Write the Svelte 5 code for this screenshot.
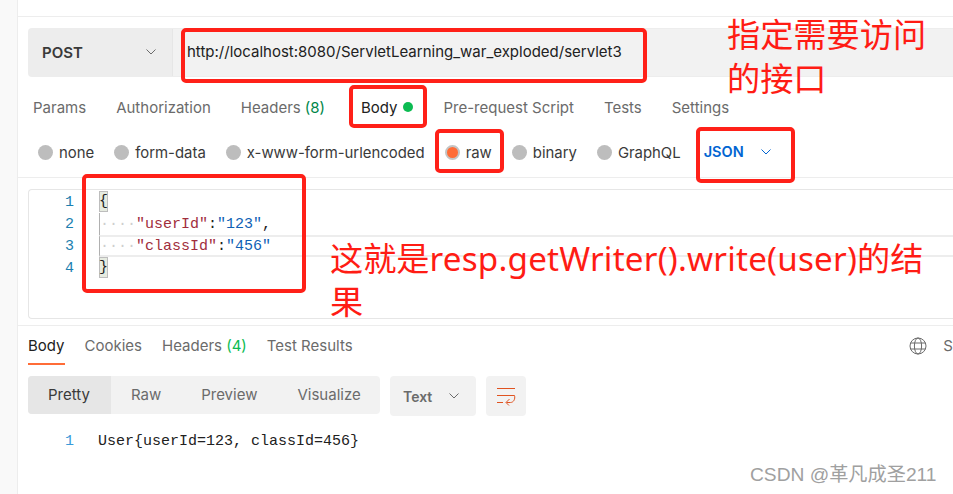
<script>
  const tabs = [
    { label: 'Params' },
    { label: 'Authorization' },
    { label: 'Headers', count: '(8)' },
    { label: 'Body', active: true, dot: true },
    { label: 'Pre-request Script' },
    { label: 'Tests' },
    { label: 'Settings' }
  ];
  const radios = [
    { label: 'none' },
    { label: 'form-data' },
    { label: 'x-www-form-urlencoded' },
    { label: 'raw', on: true },
    { label: 'binary' },
    { label: 'GraphQL' }
  ];
  const formats = ['Pretty', 'Raw', 'Preview', 'Visualize'];
  const marks = [
    { name: 'url', l: 181, t: 28, w: 466, h: 55 },
    { name: 'body', l: 349, t: 85, w: 78, h: 43 },
    { name: 'raw', l: 435, t: 129, w: 69, h: 44 },
    { name: 'json', l: 696, t: 127, w: 99, h: 56 },
    { name: 'code', l: 82, t: 174, w: 224, h: 119 }
  ];
</script>

<div class="page">
  <aside class="rail"></aside>
  <main class="main">
    <div class="top"></div>

    <div class="urlbar">
      <div class="method">
        <span>POST</span>
        <svg width="14" height="14" viewBox="0 0 14 14"><path d="M2.5 4.5 7 9l4.5-4.5" /></svg>
      </div>
      <div class="url">http://localhost:8080/ServletLearning_war_exploded/servlet3</div>
    </div>

    <nav class="tabs">
      {#each tabs as t}
        <span class="tab" class:active={t.active}>
          <span>{t.label}</span>
          {#if t.count}<em>{t.count}</em>{/if}
          {#if t.dot}<i class="dot"></i>{/if}
        </span>
      {/each}
    </nav>

    <div class="radios">
      {#each radios as r}
        <label class="radio" class:on={r.on}><i></i>{r.label}</label>
      {/each}
      <span class="json">JSON
        <svg width="14" height="14" viewBox="0 0 14 14"><path d="M2.5 4.5 7 9l4.5-4.5" /></svg>
      </span>
    </div>

    <div class="editor">
      <div class="gutter"><span>1</span><span>2</span><span>3</span><span>4</span></div>
      <div class="code">
        <div class="line"><b class="brace">&#123;</b></div>
        <div class="line guide"><s>····</s><span class="key">"userId"</span>:<span class="val">"123"</span>,</div>
        <div class="line guide current"><s>····</s><span class="key">"classId"</span>:<span class="val">"456"</span></div>
        <div class="line"><b class="brace">&#125;</b></div>
      </div>
    </div>

    <div class="response">
      <nav class="restabs">
        <span class="active">Body</span>
        <span>Cookies</span>
        <span>Headers <em>(4)</em></span>
        <span>Test Results</span>
        <div class="net">
          <svg width="18" height="18" viewBox="0 0 18 18">
            <circle cx="9" cy="9" r="8" />
            <ellipse cx="9" cy="9" rx="3.6" ry="8" />
            <path d="M1.6 6h14.8M1.6 12h14.8" />
          </svg>
          <span>Status</span>
        </div>
      </nav>

      <div class="tools">
        <div class="seg">
          {#each formats as f, i}
            <span class:sel={i === 0}>{f}</span>
          {/each}
        </div>
        <div class="lang">
          <span>Text</span>
          <svg width="14" height="14" viewBox="0 0 14 14"><path d="M2.5 4.5 7 9l4.5-4.5" /></svg>
        </div>
        <div class="wrap">
          <svg width="20" height="20" viewBox="0 0 20 20">
            <path d="M1 2.5h18M1 9.500h17.500M1 16.500h6" />
            <path d="M18.500 9.500c1 3.500-1 7-4 7h-4M13.500 13l-3.500 3.500 3 3" />
          </svg>
        </div>
      </div>

      <div class="output"><span class="no">1</span><code>User&#123;userId=123, classId=456&#125;</code></div>
    </div>
  </main>

  {#each marks as m}
    <div class="mark" style="left:{m.l}px;top:{m.t}px;width:{m.w}px;height:{m.h}px"></div>
  {/each}
  <p class="note note1">指定需要访问<br />的接口</p>
  <p class="note note2">这就是<span class="latin">resp.getWriter().write(user)</span>的结<br />果</p>
  <p class="credit">CSDN @革凡成圣211</p>
</div>

<style>
  :global(body) {
    margin: 0;
    background: #fff;
  }
  .page {
    position: relative;
    width: 953px;
    height: 494px;
    overflow: hidden;
    display: flex;
    font-family: Inter, "Noto Sans CJK SC", sans-serif;
    font-size: 14px;
    color: #212121;
  }
  .rail {
    width: 17px;
    flex: none;
    background: #f9f9f9;
    border-right: 1px solid #ededed;
  }
  .main {
    flex: 1;
    min-width: 0;
  }
  .top {
    height: 16px;
    border-bottom: 1px solid #ededed;
  }
  svg path,
  svg circle,
  svg ellipse {
    fill: none;
    stroke: currentColor;
  }

  .urlbar {
    display: flex;
    height: 49px;
    margin: 11px 0 0 10px;
    background: #f2f2f2;
    border: 1px solid #ededed;
    border-right: 0;
    border-radius: 4px 0 0 4px;
    box-sizing: border-box;
  }
  .method {
    width: 144px;
    box-sizing: border-box;
    padding: 0 14px 1px 13px;
    display: flex;
    align-items: center;
    justify-content: space-between;
    font-weight: 600;
    font-size: 15px;
    border-right: 1px solid #e6e6e6;
    background: #ededed;
    color: #3a3a3a;
  }
  .method svg {
    color: #6b6b6b;
  }
  .url {
    padding: 14px 0 0 14px;
    line-height: 17px;
    font-size: 15px;
    color: #212121;
  }

  .tabs {
    display: flex;
    gap: 30px;
    height: 34px;
    margin: 13px 0 0 15px;
    align-items: center;
    color: #6b6b6b;
    font-size: 15px;
  }
  .tab {
    display: flex;
    gap: 4px;
    align-items: center;
  }
  .tab.active {
    color: #212121;
    margin-left: 6px;
  }
  .tab em,
  .restabs em {
    font-style: normal;
    color: #0cbb52;
  }
  .tab em {
    color: #00864a;
  }
  .dot {
    width: 10px;
    height: 10px;
    border-radius: 50%;
    background: #0cbb52;
    margin-left: 2px;
  }

  .radios {
    display: flex;
    align-items: center;
    height: 44px;
    box-sizing: border-box;
    margin-top: 10px;
    padding: 0 0 6px 20px;
    border-bottom: 1px solid #ededed;
    gap: 20px;
    color: #3a3a3a;
  }
  .radio {
    display: flex;
    align-items: center;
    gap: 6px;
    font-size: 14.9px;
  }
  .radio i {
    width: 15px;
    height: 15px;
    border-radius: 50%;
    background: #bdbdbd;
  }
  .radio.on i {
    box-sizing: border-box;
    border: 2px solid #c4c4c4;
    background: #ff6c37;
  }
  .json {
    display: flex;
    align-items: center;
    gap: 15px;
    margin-left: 3px;
    color: #0265d2;
    font-weight: 600;
    font-size: 14.5px;
    padding-bottom: 2px;
  }

  .editor {
    display: flex;
    height: 130px;
    margin: 11px 0 0 10px;
    padding-top: 1px;
    box-sizing: border-box;
    border: 1px solid #e6e6e6;
    border-right: 0;
    border-radius: 4px 0 0 4px;
    font-family: "Liberation Mono", monospace;
    font-size: 15px;
  }
  .gutter {
    width: 45px;
    flex: none;
    display: flex;
    flex-direction: column;
    align-items: flex-end;
    padding-top: 1px;
    color: #1c7fb0;
    font-size: 15px;
  }
  .gutter span {
    height: 22px;
    line-height: 22px;
  }
  .code {
    flex: 1;
    margin-left: 25px;
  }
  .line {
    height: 22px;
    line-height: 24px;
    box-sizing: border-box;
    white-space: pre;
  }
  .guide {
    border-left: 1px solid #b0b0b0;
  }
  .current {
    border-top: 2px solid #ededed;
    border-bottom: 2px solid #ededed;
    line-height: 20px;
  }
  .line s {
    text-decoration: none;
    color: #cfcfcf;
  }
  .brace {
    display: inline-flex;
    justify-content: center;
    box-sizing: border-box;
    width: 9px;
    height: 21px;
    line-height: 19px;
    font-weight: 400;
    background: #e6ebe0;
    border: 1px solid #bdbdbd;
    vertical-align: top;
  }
  .key {
    color: #a12e3c;
  }
  .val {
    color: #0f5fb5;
  }

  .response {
    margin-top: 6px;
    border-top: 1px solid #ededed;
    padding: 0 0 0 10px;
  }
  .restabs {
    display: flex;
    align-items: center;
    gap: 20px;
    height: 39px;
    color: #6b6b6b;
    font-size: 15px;
  }
  .restabs > span {
    position: relative;
    line-height: 39px;
    height: 39px;
  }
  .restabs .active {
    color: #212121;
  }
  .restabs .active::after {
    content: "";
    position: absolute;
    left: 0;
    right: 0;
    bottom: 0;
    height: 2px;
    background: #ff6c37;
  }
  .net {
    margin-left: auto;
    display: flex;
    align-items: center;
    gap: 16px;
    margin-right: -35px;
    color: #6b6b6b;
  }
  .tools {
    display: flex;
    gap: 10px;
    margin-top: 11px;
  }
  .seg {
    display: flex;
    height: 38px;
    width: 352px;
    background: #f2f2f2;
    border-radius: 4px;
    overflow: hidden;
    color: #6b6b6b;
    font-size: 15px;
  }
  .seg span {
    padding: 0 20px;
    line-height: 37px;
  }
  .seg .sel {
    background: #e6e6e6;
    color: #3a3a3a;
    padding-right: 21px;
  }
  .lang {
    width: 86px;
    height: 40px;
    box-sizing: border-box;
    padding: 0 15px 0 13px;
    background: #f2f2f2;
    border-radius: 4px;
    display: flex;
    align-items: center;
    justify-content: space-between;
    font-weight: 600;
    font-size: 14px;
    color: #6b6b6b;
  }
  .wrap {
    width: 40px;
    height: 40px;
    display: grid;
    place-items: center;
    background: #f2f2f2;
    border-radius: 4px;
    color: #e05320;
  }
  .output {
    display: flex;
    margin-top: 15px;
    font-family: "Liberation Mono", monospace;
    font-size: 15px;
    line-height: 22px;
  }
  .no {
    width: 33px;
    flex: none;
    margin-left: 37px;
    color: #3a9ad9;
  }
  .output code {
    font-family: inherit;
    color: #212121;
  }

  .mark {
    position: absolute;
    box-sizing: border-box;
    border: 4px solid #ff2018;
    border-radius: 5px;
  }
  .note {
    position: absolute;
    margin: 0;
    color: #ff1c14;
    font-family: "Noto Sans", "Noto Sans CJK SC", sans-serif;
    font-size: 33.2px;
    white-space: nowrap;
  }
  .latin {
    letter-spacing: 0.2px;
  }
  .note1 {
    left: 727px;
    top: 13px;
    line-height: 44px;
  }
  .note2 {
    left: 330px;
    top: 237px;
    line-height: 43px;
  }
  .credit {
    position: absolute;
    margin: 0;
    left: 750px;
    top: 463px;
    color: #a0a0a0;
    font-family: "Liberation Sans", "Noto Sans CJK SC", sans-serif;
    font-size: 19.2px;
    line-height: 24px;
  }
</style>
